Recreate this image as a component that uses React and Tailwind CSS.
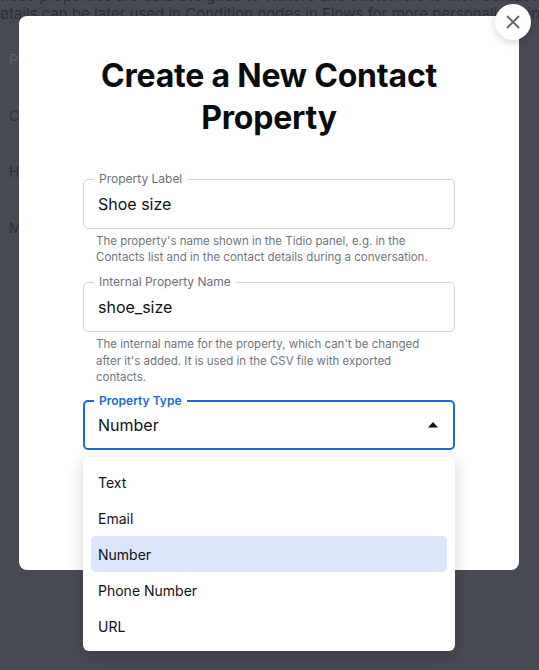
import React from "react";

const options = ["Text", "Email", "Number", "Phone Number", "URL"];

const Field = ({ label, value }) => (
    <div className="relative h-[50px] rounded-[5px] border border-[#d3d6db] flex items-center px-[14px]">
        <span className="absolute -top-[8px] left-[10px] bg-white px-[5px] text-[12px] leading-[14px] text-[#6b707b]">
            {label}
        </span>
        <span className="text-[16px] text-[#0f1117]">{value}</span>
    </div>
);

export default function App() {
    return (
        <div className="relative w-[539px] h-[670px] overflow-hidden bg-[#474a53] font-['Inter',sans-serif]">
            {/* Page behind the overlay */}
            <div className="text-[15px] leading-[18px] text-[#2d2f35] whitespace-nowrap -mt-[13px] -ml-[9px]">
                <p>These properties are data assigned to visitors and customers to their contact profiles. Their</p>
                <p>details can be later used in Condition nodes in Flows for more personalized interactions.</p>
            </div>
            <div className="flex flex-col gap-[38px] pl-[9px] pt-[28px] text-[14px] leading-[18px] text-[#2d2f35]">
                <span className="text-[#5d6069]">Property</span>
                <span>Country</span>
                <span>Height</span>
                <span>Membership</span>
            </div>

            {/* Modal */}
            <div className="absolute left-[19px] top-[16px] w-[500px] h-[554px] rounded-[8px] bg-white px-[64px] pt-[39px]">
                <h1 className="text-center text-[32px] leading-[42px] font-bold text-[#0a0b0d] tracking-[-0.2px]">
                    Create a New Contact
                    <br />
                    Property
                </h1>

                <div className="mt-[40px]">
                    <Field label="Property Label" value="Shoe size" />
                    <p className="mt-[4px] pl-[13px] pr-[20px] text-[11.5px] leading-[16px] text-[#70757f]">
                        The property's name shown in the Tidio panel, e.g. in the Contacts list and in the contact details during a conversation.
                    </p>
                </div>

                <div className="mt-[17px]">
                    <Field label="Internal Property Name" value="shoe_size" />
                    <p className="mt-[4px] pl-[13px] pr-[20px] text-[11.5px] leading-[16.5px] text-[#70757f]">
                        The internal name for the property, which can't be changed after it's added. It is used in the CSV file with exported contacts.
                    </p>
                </div>

                <div className="relative mt-[14px] h-[50px] rounded-[5px] border-2 border-[#1b6ad6] flex items-center justify-between pl-[13px] pr-[14px]">
                    <span className="absolute -top-[8px] left-[9px] bg-white px-[5px] text-[12px] leading-[14px] font-semibold text-[#1b6ad6]">
                        Property Type
                    </span>
                    <span className="text-[16px] text-[#0f1117]">Number</span>
                    <svg width="12" height="7" viewBox="0 0 12 7">
                        <path d="M1 6.5 L6 1 L11 6.5 Z" fill="#111" />
                    </svg>
                </div>
            </div>

            {/* Close button */}
            <button className="absolute left-[495px] top-[4px] w-[36px] h-[36px] rounded-full bg-white shadow-[0_2px_8px_rgba(0,0,0,0.18)] flex items-center justify-center">
                <svg width="14" height="14" viewBox="0 0 14 14">
                    <path d="M1.5 1.5 L12.5 12.5 M12.5 1.5 L1.5 12.5" stroke="#5e6370" strokeWidth="1.8" strokeLinecap="round" />
                </svg>
            </button>

            {/* Dropdown menu */}
            <ul className="absolute left-[83px] top-[457px] w-[372px] rounded-[6px] bg-white py-[7px] px-[8px] shadow-[0_4px_16px_rgba(0,0,0,0.18)]">
                {options.map((opt) => (
                    <li
                        key={opt}
                        className={`h-[36px] flex items-center px-[7px] rounded-[5px] text-[14px] text-[#0f1117] ${opt === "Number" ? "bg-[#dce6fb]" : ""}`}
                    >
                        {opt}
                    </li>
                ))}
            </ul>
        </div>
    );
}
